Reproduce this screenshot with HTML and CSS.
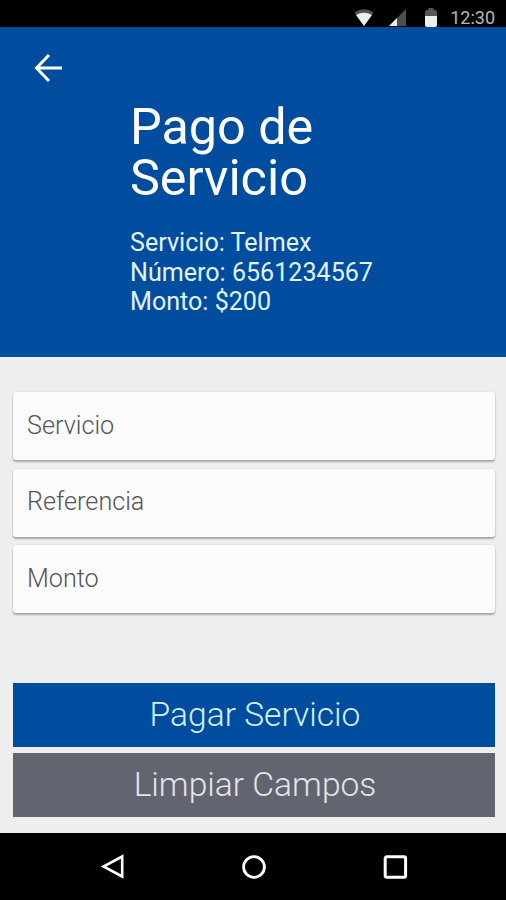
FILE: index.html
```html
<!DOCTYPE html>
<html lang="es">
<head>
  <meta charset="UTF-8">
  <meta name="viewport" content="width=device-width, initial-scale=1.0">
  <title>Pago de Servicio</title>
  <link rel="stylesheet" href="styles.css">
</head>
<body>
  <div class="status-bar">
    <svg class="wifi" width="20" height="17" viewBox="0 0 20 17">
      <path fill="#555" d="M0.5 3.5 Q10 -3 19.5 3.5 L10 17 Z"/>
      <path fill="#eee" d="M2 6 Q10 1.5 18 6 L10 17 Z"/>
    </svg>
    <svg class="signal" width="17" height="17" viewBox="0 0 17 17">
      <path fill="#4d4d4d" d="M17 0 V17 H0 Z"/>
      <path fill="#eee" d="M8 9 V17 H0 Z"/>
    </svg>
    <svg class="battery" width="12" height="19" viewBox="0 0 12 19">
      <path fill="#555" d="M0 8 V4 Q0 2 2 2 H3.5 V0 H8.5 V2 H10 Q12 2 12 4 V8 Z"/>
      <path fill="#eee" d="M0 8 H12 V17 Q12 19 10 19 H2 Q0 19 0 17 Z"/>
    </svg>
    <span class="clock">12:30</span>
  </div>

  <header class="header">
    <a class="back" href="#" aria-label="Regresar">
      <svg width="30" height="30" viewBox="0 0 30 30" fill="none" stroke="#fff" stroke-width="3">
        <path d="M16 2 L3.5 15 L16 28 M3.5 15 H29"/>
      </svg>
    </a>
    <h1>Pago de<br>Servicio</h1>
    <p class="summary">
      Servicio: Telmex<br>
      Número: 6561234567<br>
      Monto: $200
    </p>
  </header>

  <main class="content">
    <form class="form">
      <input class="field" type="text" placeholder="Servicio">
      <input class="field" type="text" placeholder="Referencia">
      <input class="field" type="text" placeholder="Monto">
      <div class="actions">
        <button class="btn btn-pay" type="button">Pagar Servicio</button>
        <button class="btn btn-clear" type="reset">Limpiar Campos</button>
      </div>
    </form>
  </main>

  <nav class="nav-bar">
    <svg width="26" height="26" viewBox="0 0 26 26" fill="none" stroke="#fff" stroke-width="2.6">
      <path d="M23.2 2.5 V22.5 L4.5 12.5 Z"/>
    </svg>
    <svg width="26" height="26" viewBox="0 0 26 26" fill="none" stroke="#fff" stroke-width="2.8">
      <circle cx="13" cy="13" r="10.4"/>
    </svg>
    <svg width="26" height="26" viewBox="0 0 26 26" fill="none" stroke="#fff" stroke-width="3">
      <rect x="3.2" y="2.8" width="20.4" height="20.4" rx="1.5"/>
    </svg>
  </nav>
</body>
</html>
```

FILE: styles.css
```css
* {
  box-sizing: border-box;
}
body {
  margin: 0;
  height: 900px;
  display: flex;
  flex-direction: column;
  font-family: Roboto, "Liberation Sans", sans-serif;
  background-color: #eeeeee;
}

/* barra de estado */
.status-bar {
  height: 27px;
  padding: 8px 11px 0 0;
  display: flex;
  justify-content: flex-end;
  align-items: flex-start;
  background-color: #000;
}
.wifi {
  margin-right: 15px;
  margin-top: 1px;
}
.signal {
  margin-right: 19px;
  margin-top: 1px;
}
.battery {
  margin-right: 13px;
}
.clock {
  font-size: 18px;
  line-height: 20px;
  color: #b8b8b8;
}

/* encabezado */
.header {
  height: 330px;
  padding: 26px 0 0 130px;
  background-color: #004c9f;
  color: #fff;
}
.back {
  display: block;
  height: 30px;
  margin: 0 0 18px -97px;
}
.back svg {
  display: block;
}
h1 {
  margin: 0 0 25px;
  font-size: 50.3px;
  font-weight: 400;
  line-height: 51px;
}
.summary {
  margin: 0;
  font-size: 25.1px;
  line-height: 29.5px;
  color: #e2f4ff;
}

/* formulario */
.content {
  flex: 1;
  padding: 35px 11px 0 13px;
}
.form {
  display: flex;
  flex-direction: column;
  gap: 8.5px;
}
.field {
  width: 100%;
  height: 68px;
  padding: 0 14px 2px;
  border: none;
  border-radius: 3px;
  background-color: #fbfbfb;
  box-shadow: 0 2px 2px rgba(0, 0, 0, 0.28), 0 0 2px rgba(0, 0, 0, 0.12);
  font-family: inherit;
  font-size: 25.2px;
  font-weight: 300;
}
.field::placeholder {
  color: #555;
  opacity: 1;
}
.actions {
  display: flex;
  flex-direction: column;
  gap: 6px;
  margin-top: 61.5px;
}
.btn {
  height: 64px;
  padding: 0 0 2px 2px;
  border: none;
  font-family: inherit;
  font-size: 33.6px;
  font-weight: 300;
}
.btn-pay {
  background-color: #004c9f;
  color: #d4f2ff;
}
.btn-clear {
  background-color: #62646f;
  color: #e4e5ec;
}

/* barra de navegación */
.nav-bar {
  height: 67px;
  padding: 0 98px 0 99px;
  display: flex;
  justify-content: space-between;
  align-items: center;
  background-color: #000;
}
```
